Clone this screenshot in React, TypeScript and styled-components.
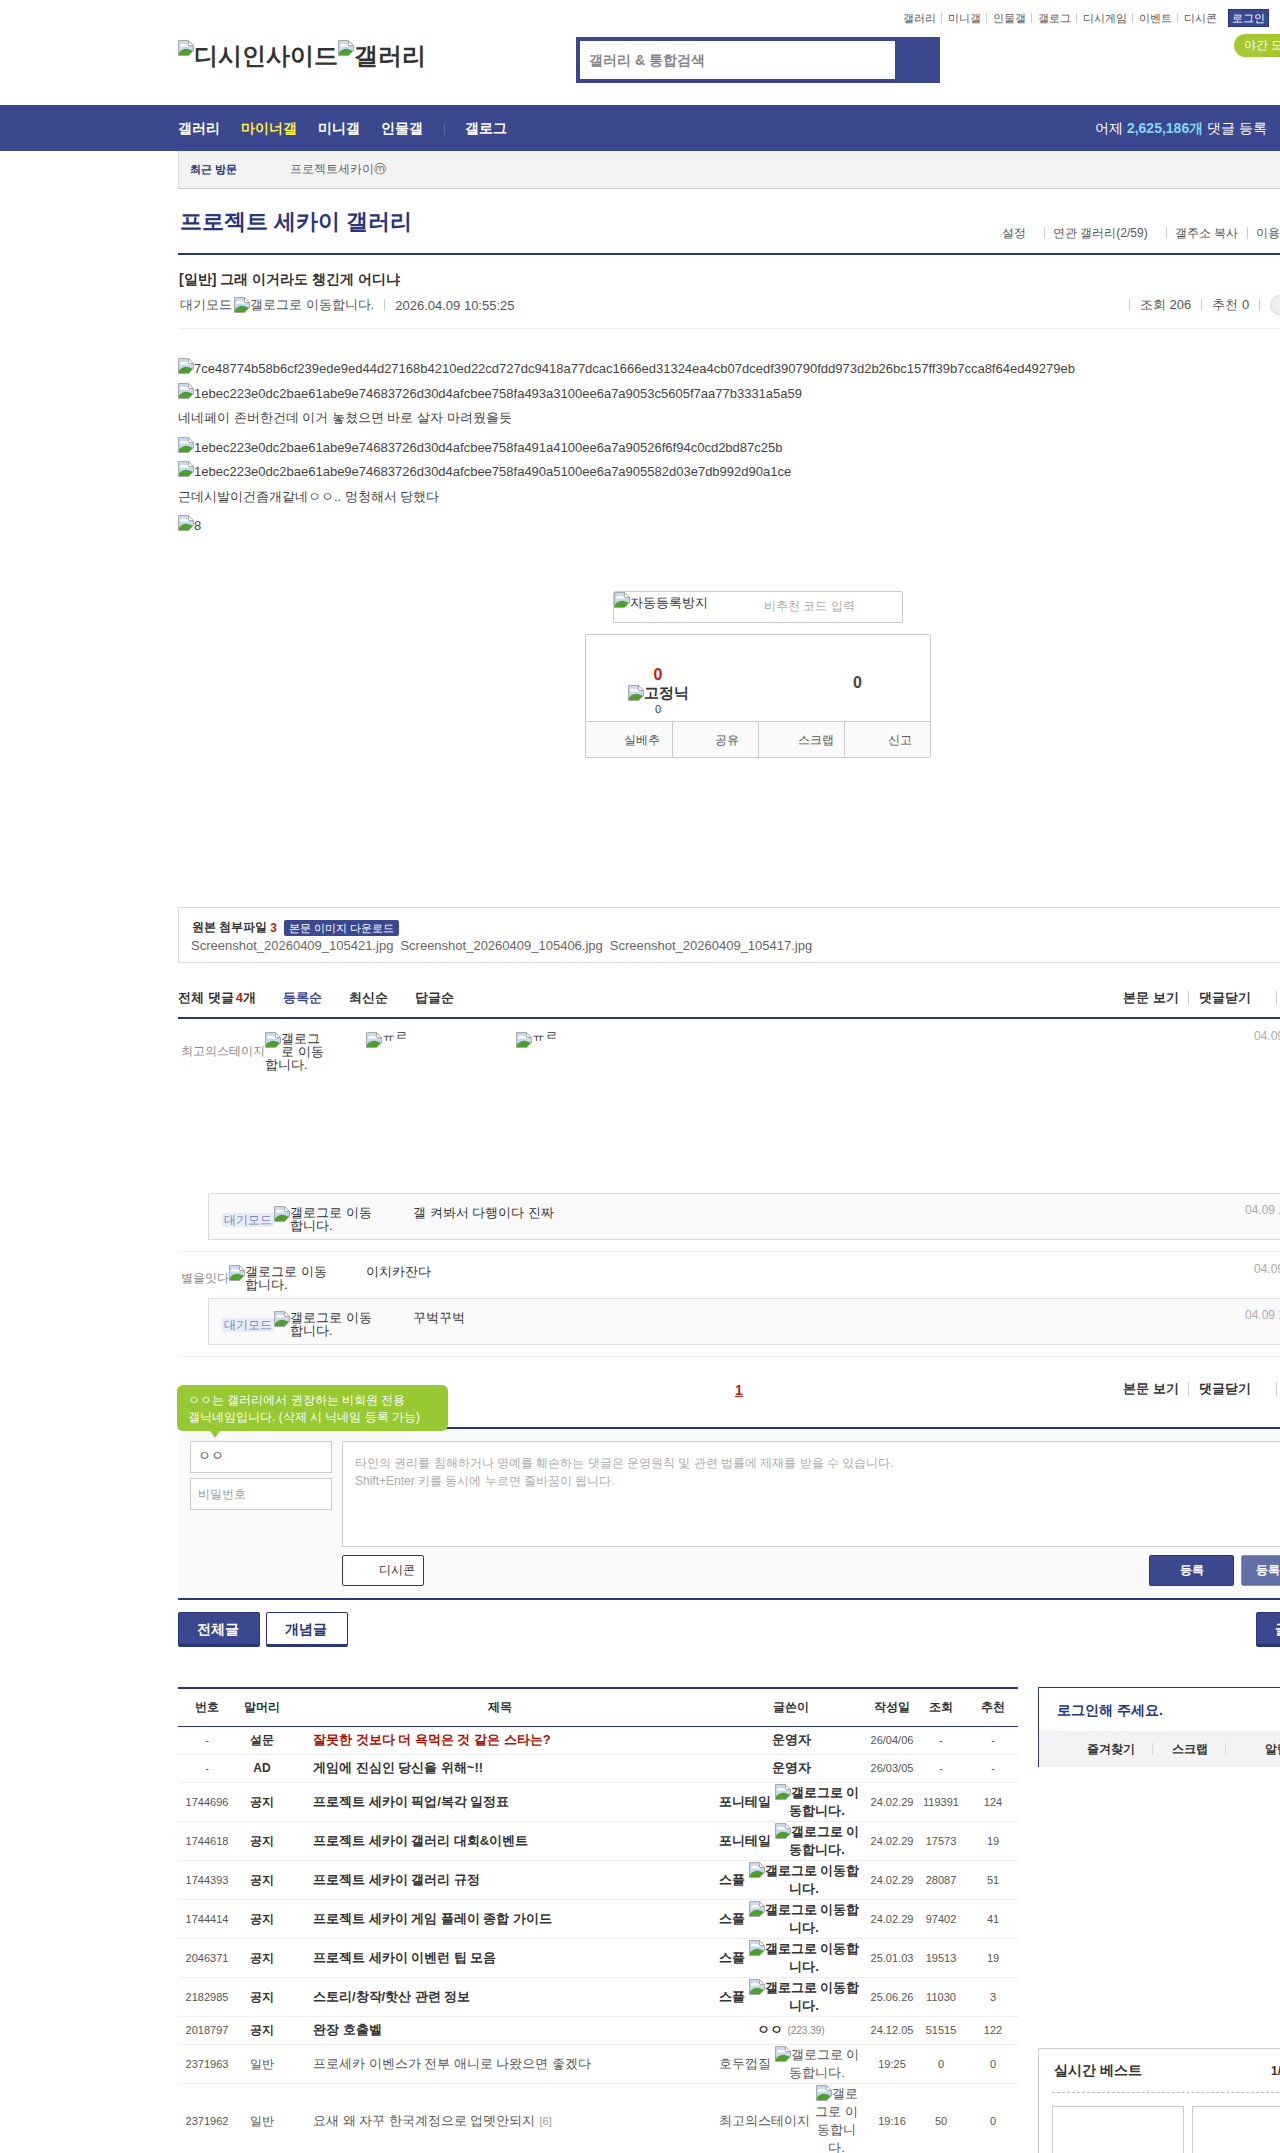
import React from "react";
import styled, { createGlobalStyle } from "styled-components";

const NAVY = "#3b4890";
const DEEP = "#29367c";
const FONT = `"Liberation Sans", sans-serif`;

const Global = createGlobalStyle`
  html, body { margin: 0; padding: 0; width: 1280px; height: 2153px; overflow: hidden; background: #fff; }
  body { font-family: ${FONT}; font-size: 13px; color: #333; }
  * { box-sizing: border-box; }
  input, button { font-family: ${FONT}; }
`;

const Page = styled.div`width: 1280px; height: 2153px; overflow: hidden; position: relative;`;

const Broken = () => (
  <BrokenSvg viewBox="0 0 16 16" width="16" height="16" aria-hidden="true">
    <path d="M.5.5H10.5L15.5 5.5V11L11 15.5H.5Z" fill="#c9d8f2" stroke="#a9a9a9" />
    <path d="M10.5.5V5.5H15.5Z" fill="#fff" stroke="#a9a9a9" />
    <path d="M2 5.5C3 3.5 6 3 7.5 4.5C9 4 10.5 5 11 6.5H2Z" fill="#fff" />
    <path d="M1 15V12.5C4 9 8 8 11.5 9.5L15 11L11 15Z" fill="#4f9e2f" />
    <path d="M11 15.5L15.5 11V15.5Z" fill="#fff" />
  </BrokenSvg>
);
const BrokenSvg = styled.svg`display: inline-block; vertical-align: -1px; flex-shrink: 0;`;

const Header = styled.header`height: 105px; padding-top: 9px;`;
const UtilRow = styled.div`display: flex; justify-content: flex-end; align-items: center; height: 18px; padding-right: 11px;`;
const UtilLink = styled.a`
  font-size: 11px; color: #555; padding: 0 5.5px; border-left: 1px solid #ccc; line-height: 10px;
  &:first-child { border-left: 0; }
`;
const LoginBtn = styled.a`
  margin-left: 6px; width: 41px; height: 18px; line-height: 16px; text-align: center; font-size: 11px; color: #fff;
  background: ${NAVY}; border: 1px solid ${DEEP};
`;
const BrandRow = styled.div`display: flex; align-items: flex-start; margin-top: 10px; padding-left: 178px;`;
const Logo = styled.div`
  width: 398px; flex-shrink: 0; font-size: 24px; font-weight: bold; line-height: 30px; padding-top: 3px; color: #333;
  svg { vertical-align: 8px; }
`;
const SearchBox = styled.form`width: 364px; height: 46px; flex-shrink: 0; background: ${NAVY}; padding: 4px 45px 4px 4px;`;
const SearchInput = styled.input`
  width: 100%; height: 38px; border: 0; background: #fff; outline: 0; padding: 0 9px; font-size: 14px; font-weight: bold;
  &::placeholder { color: #888; opacity: 1; }
`;
const NightPill = styled.button`
  margin: -3px 0 0 294px; flex-shrink: 0; width: 100px; height: 23px; border: 0; border-radius: 12px 0 0 12px;
  background: #a5c92e; color: #fff; font-size: 12px; text-align: left; padding: 0 0 0 10px;
`;

const NavBar = styled.nav`height: 46px; background: ${NAVY}; padding: 1px 0 0 178px; display: grid; grid-template-columns: 917px max-content; align-items: center;`;
const NavList = styled.div`display: flex; align-items: center; gap: 21px;`;
const NavItem = styled.a<{ $on?: boolean }>`font-size: 14px; font-weight: bold; color: ${p => (p.$on ? "#ffed44" : "#fff")};`;
const NavSep = styled.i`width: 1px; height: 12px; background: #5865a8; margin-right: -1px;`;
const NavStat = styled.div`font-size: 14px; color: #fff; white-space: nowrap;`;
const NavNum = styled.b`color: #83d7f7;`;

const Main = styled.main`width: 1160px; margin-left: 178px;`;
const VisitBar = styled.div`
  height: 38px; display: flex; align-items: center; background: #f3f3f3; border-left: 1px solid #ddd; border-bottom: 1px solid #ccc; padding-left: 11px; font-size: 12px;
`;
const VisitLabel = styled.b`width: 100px; font-size: 11px; color: ${DEEP};`;
const VisitItem = styled.a`color: #666;`;

const TitleRow = styled.div`height: 66px; display: grid; grid-template-columns: 824px max-content; align-items: end; border-bottom: 2px solid ${DEEP}; padding-bottom: 14px;`;
const GalleryTitle = styled.h1`margin: 0 0 0 2px; font-size: 22px; line-height: 30px; color: ${DEEP}; align-self: start; padding-top: 18px; white-space: nowrap;`;
const Links = styled.div`display: flex; align-items: center; font-size: 12px; color: #555; white-space: nowrap;`;
const LinkItem = styled.a<{ $w?: number }>`
  display: block; line-height: 12px; padding: 0 9px 0 8px; border-left: 1px solid #ccc; ${p => p.$w && `margin-right:${p.$w}px;`}
  &:first-child { border-left: 0; padding-left: 0; }
`;

const PostHead = styled.div`height: 74px; border-bottom: 1px solid #eee; padding: 14px 0 0 1px;`;
const PostTitle = styled.h2`margin: 0; font-size: 14px; line-height: 20px; color: #333;`;
const PostMeta = styled.div`display: grid; grid-template-columns: 939px max-content; margin-top: 5px; align-items: center; font-size: 13px; color: #555;`;
const MetaLeft = styled.div`display: flex; align-items: center; white-space: nowrap; padding-left: 1px;`;
const AuthorName = styled.span`margin-right: 2px;`;
const MetaSep = styled.i`width: 1px; height: 12px; background: #ccc; margin: 0 10px;`;
const Circle = styled.i`width: 28px; height: 22px; border-radius: 50%; background: #eee; border: 1px solid #ddd; flex-shrink: 0;`;

const Body = styled.div`padding-top: 28px; height: 262px; font-size: 13px; color: #444;`;
const BodyLine = styled.div<{ $mt?: number }>`line-height: 24px; height: 24px; white-space: nowrap; margin-top: ${p => p.$mt ?? 0}px;`;

const Captcha = styled.div`
  width: 290px; height: 32px; margin: 0 auto; border: 1px solid #ccc; border-radius: 2px; display: flex; align-items: flex-start; font-size: 13px; line-height: 20px; color: #333;
`;
const CaptchaAlt = styled.span`width: 150px; flex-shrink: 0;`;
const CaptchaHint = styled.span`font-size: 12px; line-height: 28px; color: #aaa; white-space: nowrap;`;
const VoteBox = styled.div`width: 346px; height: 124px; margin: 11px auto 0; border: 1px solid #ccc; border-radius: 2px; overflow: hidden;`;
const VoteTop = styled.div`height: 87px; display: grid; grid-template-columns: 172px 1fr; border-bottom: 1px solid #ccc;`;
const VoteUp = styled.div`padding-top: 30px; text-align: center; padding-right: 28px;`;
const VoteRed = styled.div`font-size: 16px; font-weight: bold; color: #c31d0d; line-height: 20px;`;
const VoteFix = styled.div`
  font-size: 15px; font-weight: bold; line-height: 16px; color: #333;
  svg { vertical-align: -3px; }
`;
const VoteSmall = styled.div`font-size: 11px; line-height: 13px; margin-top: 2px; color: ${DEEP};`;
const VoteDown = styled.div`font-size: 16px; font-weight: bold; line-height: 20px; padding: 38px 0 0 95px; color: #444;`;
const VoteActions = styled.div`display: grid; grid-template-columns: repeat(4, 1fr); height: 35px; background: #fafafa;`;
const VoteAction = styled.a<{ $pl: number }>`
  font-size: 12px; color: #555; line-height: 36px; padding-left: ${p => p.$pl}px; border-left: 1px solid #ccc;
  &:first-child { border-left: 0; }
`;

const AttachBox = styled.div`height: 56px; margin-top: 149px; border: 1px solid #ddd; padding: 11px 12px 0 13px;`;
const AttachTop = styled.div`display: flex; align-items: center; height: 17px; font-size: 12px; font-weight: bold; color: #333;`;
const Red = styled.span`color: #c31d0d; font-weight: bold; margin-left: 3px;`;
const ImgDown = styled.a`
  margin-left: 7px; height: 16px; line-height: 16px; padding: 0 5px; background: ${NAVY}; border-radius: 2px; color: #fff; font-size: 11px; font-weight: normal;
`;
const AttachFiles = styled.div`display: flex; gap: 7px; font-size: 13px; color: #666; line-height: 18px; margin: 1px 0 0 -1px; white-space: nowrap;`;

const CmtHead = styled.div`display: grid; grid-template-columns: 945px max-content; height: 56px; padding-top: 16px; align-items: center; border-bottom: 2px solid ${DEEP};`;
const SortRow = styled.div`display: flex; gap: 27px; font-size: 13px; font-weight: bold; white-space: nowrap;`;
const SortItem = styled.a<{ $on?: boolean }>`color: ${p => (p.$on ? NAVY : "#333")};`;
const RedCount = styled.span`color: #c31d0d; margin-left: 2px;`;
const ViewLinks = styled.div`display: flex; align-items: center; font-size: 13px; font-weight: bold; white-space: nowrap; color: #333;`;
const ViewLink = styled.a<{ $mr: number }>`line-height: 14px; padding-right: ${p => p.$mr}px; margin-right: 10px; border-right: 1px solid #ccc;`;

const Comment = styled.div<{ $h: number }>`
  display: grid; grid-template-columns: 188px 888px 1fr; height: ${p => p.$h}px; padding-top: 13px;
`;
const Reply = styled.div`
  display: grid; grid-template-columns: 191px 832px 1fr; height: 47px; margin-left: 30px; padding: 12px 0 0 13px; background: #fafafa;
  border: 1px solid #ddd; border-right: 0;
`;
const Gap = styled.div`height: 12px; border-bottom: 1px solid #eee;`;
const WhoCell = styled.div`display: flex; align-items: center; align-self: start; padding-left: 3px;`;
const ReplyWho = styled.div`display: flex; align-items: center; align-self: start;`;
const Nick = styled.span<{ $mark?: boolean }>`font-size: 12px; color: #888; white-space: nowrap; ${p => p.$mark && `background: #e7ecf9; padding: 0 2px; line-height: 14px; color: #7a86b8; margin-top: 2px;`}`;
const AltBox = styled.span<{ $w: number }>`display: block; width: ${p => p.$w}px; font-size: 13px; line-height: 13px; color: #333;`;
const AltFloat = styled.span`float: left; height: 16px; width: 16px; line-height: 0;`;
const CmtText = styled.div`font-size: 13px; line-height: 13px; color: #333; white-space: nowrap;`;
const DcconRow = styled.div`display: flex;`;
const Dccon = styled.span`width: 150px; display: flex; line-height: 0; align-items: flex-start;`;
const DcconText = styled.span`display: block; font-size: 13px; line-height: 13px; margin-top: -3px; color: #333; white-space: nowrap;`;
const CmtDate = styled.div`font-size: 12px; line-height: 8px; color: #aaa; white-space: nowrap;`;

const PagerRow = styled.div`position: relative; height: 70px; display: grid; grid-template-columns: 557px 388px max-content; padding-top: 25px; align-items: start;`;
const PageNum = styled.a`font-size: 14px; font-weight: bold; color: #c31d0d; text-decoration: underline; grid-column: 1; padding-left: 557px; white-space: nowrap; width: 0;`;
const PagerLinks = styled(ViewLinks)`grid-column: 3;`;
const Tip = styled.div`
  position: absolute; z-index: 2; left: -1px; top: 28px; width: 271px; height: 46px; background: #98c832; border-radius: 6px; padding: 7px 11px; color: #fff; font-size: 12px; line-height: 17px;
  &::after { content: ""; position: absolute; left: 33px; bottom: -7px; border: 5px solid transparent; border-top: 7px solid #98c832; border-bottom: 0; }
`;

const CmtForm = styled.div`
  border-top: 2px solid ${DEEP}; border-bottom: 2px solid ${DEEP}; background: #fafafa; padding: 12px; display: grid; grid-template-columns: 142px 1fr; column-gap: 10px; height: 173px;
`;
const FormLeft = styled.div`display: flex; flex-direction: column; gap: 5px;`;
const TextInput = styled.input`
  width: 142px; height: 32px; border: 1px solid #ccc; background: #fff; padding: 0 7px 2px; font-size: 13px; color: #333; outline: 0;
  &::placeholder { color: #999; opacity: 1; font-size: 12px; }
`;
const FormRight = styled.div`display: flex; flex-direction: column;`;
const TextArea = styled.div`height: 106px; border: 1px solid #ccc; background: #fff; padding: 12px 12px; font-size: 12px; line-height: 18px; color: #aaa;`;
const FormBar = styled.div`display: flex; justify-content: space-between; margin-top: 8px;`;
const DcBtn = styled.button`
  width: 82px; height: 31px; background: #fff; border: 1px solid ${DEEP}; border-radius: 2px; font-size: 12px; color: #333; text-align: right; padding: 0 8px 0 0;
`;
const SubmitGroup = styled.div`display: flex; gap: 7px;`;
const Submit = styled.button<{ $soft?: boolean }>`
  width: 85px; height: 31px; border: 1px solid ${p => (p.$soft ? "#8a92bb" : DEEP)}; border-radius: 2px; background: ${p => (p.$soft ? "#626ea4" : NAVY)}; color: #fff; font-size: 12px; font-weight: bold;
`;

const TabRow = styled.div`display: flex; margin-top: 12px; height: 35px; gap: 6px;`;
const TabBtn = styled.a<{ $on?: boolean }>`
  width: 82px; height: 35px; text-align: center; line-height: 32px; padding-right: 2px; font-size: 14px; font-weight: bold; border: 1px solid ${DEEP}; border-bottom-width: 3px; border-radius: 2px;
  background: ${p => (p.$on ? NAVY : "#fff")}; color: ${p => (p.$on ? "#fff" : DEEP)};
`;
const WriteBtn = styled(TabBtn)`margin-left: auto;`;

const Board = styled.div`display: flex; gap: 20px; margin-top: 40px; align-items: flex-start;`;
const Table = styled.table`width: 840px; flex-shrink: 0; border-collapse: collapse; table-layout: fixed; border-top: 2px solid ${DEEP};`;
const Th = styled.th`height: 38px; padding: 0; font-size: 12px; color: #333; font-weight: bold; border-bottom: 1px solid ${DEEP};`;
const Td = styled.td<{ $h?: boolean; $small?: boolean; $left?: boolean }>`
  padding: 1px 0; height: ${p => (p.$h ? 28 : 39)}px; text-align: ${p => (p.$left ? "left" : "center")};
  font-size: ${p => (p.$small ? 11 : 13)}px; line-height: 18px; border-bottom: 1px solid #eee; color: #555;
`;
const HeadCell = styled.span`font-size: 12px; font-weight: bold; color: #333;`;
const PlainCell = styled.span`font-size: 12px; color: #555;`;
const TitleLink = styled.a<{ $strong?: boolean; $red?: boolean }>`
  padding-left: 25px; display: block; white-space: nowrap; font-weight: ${p => (p.$strong ? "bold" : "normal")}; color: ${p => (p.$red ? "#b00f00" : p.$strong ? "#333" : "#555")};
`;
const ReplyNum = styled.span`font-size: 11px; color: #999; margin-left: 4px;`;
const Writer = styled.div`display: flex; align-items: center; padding-left: 7px; text-align: center; font-size: 13px;`;
const WriterNick = styled.span<{ $strong?: boolean }>`flex-shrink: 0; font-weight: ${p => (p.$strong ? "bold" : "normal")}; color: ${p => (p.$strong ? "#333" : "#555")};`;
const WriterAlt = styled.span<{ $strong?: boolean }>`
  flex: 1; min-width: 0; padding-right: 9px; padding-left: 2px; font-weight: ${p => (p.$strong ? "bold" : "normal")}; color: ${p => (p.$strong ? "#333" : "#555")};
  svg { vertical-align: -3px; }
`;
const Center = styled.b`color: #333;`;
const Ip = styled.span`font-size: 10px; color: #888; font-weight: normal; margin-left: 4px;`;

const Aside = styled.aside`width: 300px; flex-shrink: 0;`;
const LoginBox = styled.div`height: 80px; border: 1px solid ${DEEP}; border-right: 0;`;
const LoginMsg = styled.div`height: 43px; padding: 13px 0 0 18px; font-size: 14px; font-weight: bold; line-height: 18px; color: ${DEEP};`;
const LoginTabs = styled.div`height: 36px; background: #f3f3f3; display: flex; align-items: center; font-size: 12px; font-weight: bold; color: #333; padding-left: 48px; white-space: nowrap;`;
const LoginTab = styled.a<{ $mr: number }>`line-height: 12px; padding-right: ${p => p.$mr}px; margin-right: 19px; border-right: 1px solid #ddd;`;
const LastTab = styled.a`margin-left: 20px;`;
const BestBox = styled.div`margin-top: 281px; height: 200px; border: 1px solid #ccc; padding: 0 13px;`;
const BestHead = styled.div`height: 44px; display: grid; grid-template-columns: 217px max-content; align-items: center; border-bottom: 1px dashed #bbb; padding-left: 2px; font-weight: bold;`;
const BestTitle = styled.span`font-size: 14px; color: #333; white-space: nowrap;`;
const BestPage = styled.span`font-size: 12px; color: #333;`;
const Thumbs = styled.div`display: flex; gap: 8px; margin-top: 13px;`;
const Thumb = styled.div`width: 132px; height: 130px; border: 1px solid #ccc; flex-shrink: 0;`;

type Row = { no: string; head: string; title: string; nick: string; strong?: boolean; red?: boolean; short?: boolean; alt?: boolean; date: string; view: string; up: string; headBold?: boolean; ip?: string; reply?: string };

const rows: Row[] = [
  { no: "-", head: "설문", headBold: true, title: "잘못한 것보다 더 욕먹은 것 같은 스타는?", nick: "운영자", strong: true, red: true, short: true, date: "26/04/06", view: "-", up: "-" },
  { no: "-", head: "AD", headBold: true, title: "게임에 진심인 당신을 위해~!!", nick: "운영자", strong: true, short: true, date: "26/03/05", view: "-", up: "-" },
  { no: "1744696", head: "공지", headBold: true, title: "프로젝트 세카이 픽업/복각 일정표", nick: "포니테일", strong: true, alt: true, date: "24.02.29", view: "119391", up: "124" },
  { no: "1744618", head: "공지", headBold: true, title: "프로젝트 세카이 갤러리 대회&이벤트", nick: "포니테일", strong: true, alt: true, date: "24.02.29", view: "17573", up: "19" },
  { no: "1744393", head: "공지", headBold: true, title: "프로젝트 세카이 갤러리 규정", nick: "스플", strong: true, alt: true, date: "24.02.29", view: "28087", up: "51" },
  { no: "1744414", head: "공지", headBold: true, title: "프로젝트 세카이 게임 플레이 종합 가이드", nick: "스플", strong: true, alt: true, date: "24.02.29", view: "97402", up: "41" },
  { no: "2046371", head: "공지", headBold: true, title: "프로젝트 세카이 이벤런 팁 모음", nick: "스플", strong: true, alt: true, date: "25.01.03", view: "19513", up: "19" },
  { no: "2182985", head: "공지", headBold: true, title: "스토리/창작/핫산 관련 정보", nick: "스플", strong: true, alt: true, date: "25.06.26", view: "11030", up: "3" },
  { no: "2018797", head: "공지", headBold: true, title: "완장 호출벨", nick: "ㅇㅇ", strong: true, short: true, ip: "(223.39)", date: "24.12.05", view: "51515", up: "122" },
  { no: "2371963", head: "일반", title: "프로세카 이벤스가 전부 애니로 나왔으면 좋겠다", nick: "호두껍질", alt: true, date: "19:25", view: "0", up: "0" },
  { no: "2371962", head: "일반", title: "요새 왜 자꾸 한국계정으로 업뎃안되지", reply: "[6]", nick: "최고의스테이지", alt: true, date: "19:16", view: "50", up: "0" },
];

const ALT = "갤로그로 이동합니다.";

export default function App() {
  return (
    <Page>
      <Global />
      <Header>
        <UtilRow>
          {["갤러리", "미니갤", "인물갤", "갤로그", "디시게임", "이벤트", "디시콘"].map(t => <UtilLink key={t}>{t}</UtilLink>)}
          <LoginBtn>로그인</LoginBtn>
        </UtilRow>
        <BrandRow>
          <Logo><Broken />디시인사이드<Broken />갤러리</Logo>
          <SearchBox onSubmit={e => e.preventDefault()}><SearchInput placeholder="갤러리 & 통합검색" /></SearchBox>
          <NightPill>야간 모드</NightPill>
        </BrandRow>
      </Header>
      <NavBar>
        <NavList>
          <NavItem>갤러리</NavItem><NavItem $on>마이너갤</NavItem><NavItem>미니갤</NavItem><NavItem>인물갤</NavItem><NavSep /><NavItem>갤로그</NavItem>
        </NavList>
        <NavStat>어제 <NavNum>2,625,186개</NavNum> 댓글 등록</NavStat>
      </NavBar>
      <Main>
        <VisitBar><VisitLabel>최근 방문</VisitLabel><VisitItem>프로젝트세카이ⓜ</VisitItem></VisitBar>
        <TitleRow>
          <GalleryTitle>프로젝트 세카이 갤러리</GalleryTitle>
          <Links>
            <LinkItem $w={9}>설정</LinkItem><LinkItem $w={9}>연관 갤러리(2/59)</LinkItem><LinkItem>갤주소 복사</LinkItem><LinkItem>이용안내</LinkItem>
          </Links>
        </TitleRow>
        <PostHead>
          <PostTitle>[일반] 그래 이거라도 챙긴게 어디냐</PostTitle>
          <PostMeta>
            <MetaLeft><AuthorName>대기모드</AuthorName><Broken />{ALT}<MetaSep />2026.04.09 10:55:25</MetaLeft>
            <MetaLeft><MetaSep />조회 206<MetaSep />추천 0<MetaSep /><Circle /></MetaLeft>
          </PostMeta>
        </PostHead>
        <Body>
          <BodyLine><Broken />7ce48774b58b6cf239ede9ed44d27168b4210ed22cd727dc9418a77dcac1666ed31324ea4cb07dcedf390790fdd973d2b26bc157ff39b7cca8f64ed49279eb</BodyLine>
          <BodyLine $mt={1}><Broken />1ebec223e0dc2bae61abe9e74683726d30d4afcbee758fa493a3100ee6a7a9053c5605f7aa77b3331a5a59</BodyLine>
          <BodyLine>네네페이 존버한건데 이거 놓쳤으면 바로 살자 마려웠을듯</BodyLine>
          <BodyLine $mt={6}><Broken />1ebec223e0dc2bae61abe9e74683726d30d4afcbee758fa491a4100ee6a7a90526f6f94c0cd2bd87c25b</BodyLine>
          <BodyLine><Broken />1ebec223e0dc2bae61abe9e74683726d30d4afcbee758fa490a5100ee6a7a905582d03e7db992d90a1ce</BodyLine>
          <BodyLine $mt={1}>근데시발이건좀개같네ㅇㅇ.. 멍청해서 당했다</BodyLine>
          <BodyLine $mt={5}><Broken />8</BodyLine>
        </Body>
        <Captcha>
          <CaptchaAlt><Broken />자동등록방지</CaptchaAlt>
          <CaptchaHint>비추천 코드 입력</CaptchaHint>
        </Captcha>
        <VoteBox>
          <VoteTop>
            <VoteUp>
              <VoteRed>0</VoteRed>
              <VoteFix><Broken />고정닉</VoteFix>
              <VoteSmall>0</VoteSmall>
            </VoteUp>
            <VoteDown>0</VoteDown>
          </VoteTop>
          <VoteActions>
            <VoteAction $pl={38}>실베추</VoteAction><VoteAction $pl={42}>공유</VoteAction><VoteAction $pl={39}>스크랩</VoteAction><VoteAction $pl={43}>신고</VoteAction>
          </VoteActions>
        </VoteBox>
        <AttachBox>
          <AttachTop>원본 첨부파일<Red>3</Red><ImgDown>본문 이미지 다운로드</ImgDown></AttachTop>
          <AttachFiles><span>Screenshot_20260409_105421.jpg</span><span>Screenshot_20260409_105406.jpg</span><span>Screenshot_20260409_105417.jpg</span></AttachFiles>
        </AttachBox>
        <CmtHead>
          <SortRow>
            <SortItem>전체 댓글<RedCount>4</RedCount>개</SortItem><SortItem $on>등록순</SortItem><SortItem>최신순</SortItem><SortItem>답글순</SortItem>
          </SortRow>
          <ViewLinks><ViewLink $mr={9}>본문 보기</ViewLink><ViewLink $mr={25}>댓글닫기</ViewLink></ViewLinks>
        </CmtHead>
        <Comment $h={174}>
          <WhoCell><Nick>최고의스테이지</Nick><AltBox $w={60}><AltFloat><Broken /></AltFloat>{ALT}</AltBox></WhoCell>
          <DcconRow><Dccon><Broken /><DcconText>ㅠㄹ</DcconText></Dccon><Dccon><Broken /><DcconText>ㅠㄹ</DcconText></Dccon></DcconRow>
          <CmtDate>04.09 10:57:01</CmtDate>
        </Comment>
        <Reply>
          <ReplyWho><Nick $mark>대기모드</Nick><AltBox $w={102}><AltFloat><Broken /></AltFloat>{ALT}</AltBox></ReplyWho>
          <CmtText>갤 켜봐서 다행이다 진짜</CmtText>
          <CmtDate>04.09 10:59:12</CmtDate>
        </Reply>
        <Gap />
        <Comment $h={46}>
          <WhoCell><Nick>별을잇다</Nick><AltBox $w={102}><AltFloat><Broken /></AltFloat>{ALT}</AltBox></WhoCell>
          <CmtText>이치카잔다</CmtText>
          <CmtDate>04.09 11:02:45</CmtDate>
        </Comment>
        <Reply>
          <ReplyWho><Nick $mark>대기모드</Nick><AltBox $w={102}><AltFloat><Broken /></AltFloat>{ALT}</AltBox></ReplyWho>
          <CmtText>꾸벅꾸벅</CmtText>
          <CmtDate>04.09 11:04:18</CmtDate>
        </Reply>
        <Gap />
        <PagerRow>
          <Tip>ㅇㅇ는 갤러리에서 권장하는 비회원 전용<br />갤닉네임입니다. (삭제 시 닉네임 등록 가능)</Tip>
          <PageNum>1</PageNum>
          <PagerLinks><ViewLink $mr={9}>본문 보기</ViewLink><ViewLink $mr={25}>댓글닫기</ViewLink></PagerLinks>
        </PagerRow>
        <CmtForm>
          <FormLeft>
            <TextInput defaultValue="ㅇㅇ" />
            <TextInput placeholder="비밀번호" />
          </FormLeft>
          <FormRight>
            <TextArea>타인의 권리를 침해하거나 명예를 훼손하는 댓글은 운영원칙 및 관련 법률에 제재를 받을 수 있습니다.<br />Shift+Enter 키를 동시에 누르면 줄바꿈이 됩니다.</TextArea>
            <FormBar>
              <DcBtn>디시콘</DcBtn>
              <SubmitGroup><Submit>등록</Submit><Submit $soft>등록+추천</Submit></SubmitGroup>
            </FormBar>
          </FormRight>
        </CmtForm>
        <TabRow>
          <TabBtn $on>전체글</TabBtn><TabBtn>개념글</TabBtn><WriteBtn $on>글쓰기</WriteBtn>
        </TabRow>
        <Board>
          <Table>
            <colgroup>
              <col width="58" /><col width="52" /><col width="424" /><col width="158" /><col width="44" /><col width="54" /><col width="50" />
            </colgroup>
            <thead>
              <tr><Th>번호</Th><Th>말머리</Th><Th>제목</Th><Th>글쓴이</Th><Th>작성일</Th><Th>조회</Th><Th>추천</Th></tr>
            </thead>
            <tbody>
              {rows.map(r => (
                <tr key={r.no + r.title}>
                  <Td $h={r.short} $small>{r.no}</Td>
                  <Td $h={r.short}>{r.headBold ? <HeadCell>{r.head}</HeadCell> : <PlainCell>{r.head}</PlainCell>}</Td>
                  <Td $h={r.short} $left><TitleLink $strong={r.strong} $red={r.red}>{r.title}{r.reply && <ReplyNum>{r.reply}</ReplyNum>}</TitleLink></Td>
                  <Td $h={r.short}>
                    {r.alt ? (
                      <Writer>
                        <WriterNick $strong={r.strong}>{r.nick}</WriterNick>
                        <WriterAlt $strong={r.strong}><Broken />{ALT}</WriterAlt>
                      </Writer>
                    ) : (
                      <Center>{r.nick}{r.ip && <Ip>{r.ip}</Ip>}</Center>
                    )}
                  </Td>
                  <Td $h={r.short} $small>{r.date}</Td>
                  <Td $h={r.short} $small>{r.view}</Td>
                  <Td $h={r.short} $small>{r.up}</Td>
                </tr>
              ))}
            </tbody>
          </Table>
          <Aside>
            <LoginBox>
              <LoginMsg>로그인해 주세요.</LoginMsg>
              <LoginTabs><LoginTab $mr={17}>즐겨찾기</LoginTab><LoginTab $mr={17}>스크랩</LoginTab><LastTab>알림</LastTab></LoginTabs>
            </LoginBox>
            <BestBox>
              <BestHead><BestTitle>실시간 베스트</BestTitle><BestPage>1/4</BestPage></BestHead>
              <Thumbs><Thumb /><Thumb /></Thumbs>
            </BestBox>
          </Aside>
        </Board>
      </Main>
    </Page>
  );
}
